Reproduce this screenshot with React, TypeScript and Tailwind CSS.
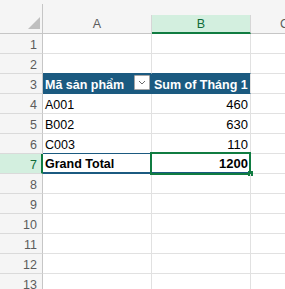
import React from "react";

type Row = { n: number; a?: string; b?: string; kind?: "head" | "data" | "total" };

const rows: Row[] = [
  { n: 1 },
  { n: 2 },
  { n: 3, a: "Mã sản phẩm", b: "Sum of Tháng 1", kind: "head" },
  { n: 4, a: "A001", b: "460", kind: "data" },
  { n: 5, a: "B002", b: "630", kind: "data" },
  { n: 6, a: "C003", b: "110", kind: "data" },
  { n: 7, a: "Grand Total", b: "1200", kind: "total" },
  { n: 8 },
  { n: 9 },
  { n: 10 },
  { n: 11 },
  { n: 12 },
  { n: 13 },
  { n: 14 },
];

function Chevron() {
  return (
    <svg width="8" height="5" viewBox="0 0 8 5" fill="none">
      <path d="M1 1 L4 4 L7 1" stroke="#6b6b6b" strokeWidth="1" />
    </svg>
  );
}

export default function App() {
  const dataFont = "font-['Liberation_Sans',Arial,sans-serif] text-[12.5px] leading-[12px]";
  const numFont = "font-['Liberation_Sans',Arial,sans-serif] text-[13px] leading-[12px]";
  const hdrFont = "font-['Liberation_Sans',Arial,sans-serif] text-[12.5px] leading-[12px]";
  return (
    <div className="w-[285px] h-[289px] overflow-hidden bg-white">
      {/* Column header */}
      <div className={`flex h-[34px] items-end bg-[#f5f5f5] ${hdrFont}`}>
        <div className="flex h-[34px] w-[43px] shrink-0 border-b border-[#c6c6c6]">
          <div className="relative w-[42px]">
            <svg className="absolute left-[28px] top-[17px]" width="12" height="12" viewBox="0 0 12 12">
              <polygon points="12,0 12,12 0,12" fill="#bfbfbf" />
            </svg>
          </div>
          <div className="mt-[4px] w-px bg-[#c6c6c6]" />
        </div>
        <div className="flex h-[19px] w-[109px] shrink-0 items-end justify-center border-r border-b border-r-[#d6d6d6] border-b-[#c6c6c6] pb-[3px] text-[#5c5c5c]">
          A
        </div>
        <div className="flex h-[19px] w-[99px] shrink-0 items-end justify-center border-r border-b-2 border-r-[#d6d6d6] border-b-[#107c41] bg-[#d3efdf] pb-[2px] text-[#0e6b38]">
          B
        </div>
        <div className="flex h-[19px] flex-1 items-end overflow-hidden whitespace-nowrap border-b border-[#c6c6c6] pb-[3px] pl-[29px] text-[#5c5c5c]">
          C
        </div>
      </div>

      {rows.map((r) => {
        const isHead = r.kind === "head";
        const isTotal = r.kind === "total";
        const abBottom =
          r.n === 2 || r.n === 3 || r.n === 6
            ? "border-b border-b-[#1b5a80]"
            : isTotal
            ? "border-b-2 border-b-[#1b5a80]"
            : "border-b border-b-[#e1e1e1]";
        return (
          <div key={r.n} className="flex h-[20px]">
            <div
              className={`flex w-[43px] shrink-0 items-end justify-end border-b border-b-[#dadada] pb-[2px] ${hdrFont} ${
                isTotal
                  ? "border-r-2 border-r-[#107c41] bg-[#d3efdf] pr-[4px] text-[#0e6b38]"
                  : "border-r border-r-[#c6c6c6] bg-[#f5f5f5] pr-[5px] text-[#5c5c5c]"
              }`}
            >
              {r.n}
            </div>
            <div
              className={`flex w-[109px] shrink-0 items-end pb-[2px] pl-[2px] ${dataFont} ${abBottom} border-r ${
                isHead ? "border-r-[#1b5a80] bg-[#1b5a80] font-bold text-white" : "border-r-[#e1e1e1] text-black"
              } ${isTotal ? "font-bold" : ""}`}
            >
              <span className="whitespace-nowrap">{r.a}</span>
              {isHead && (
                <div className="mr-[1px] ml-auto flex h-[15px] w-[16px] self-center items-center justify-center rounded-[1px] border border-[#a6a6a6] bg-white">
                  <Chevron />
                </div>
              )}
            </div>
            <div
              className={`relative flex w-[99px] shrink-0 items-end pb-[2px] ${abBottom} border-r border-r-[#e1e1e1] ${
                isHead
                  ? `${dataFont} justify-start bg-[#1b5a80] pl-[2px] font-bold text-white`
                  : `${numFont} justify-end pr-[2px] text-black`
              } ${isTotal ? "font-bold" : ""}`}
            >
              <span className="whitespace-nowrap">{r.b}</span>
              {isTotal && (
                <>
                  <div className="pointer-events-none absolute left-[-2px] top-[-2px] h-[23px] w-[101px] border-2 border-[#107c41]" />
                  <div className="absolute left-[96px] top-[17px] h-[5px] w-[5px] bg-[#107c41]" />
                </>
              )}
            </div>
            <div className="flex-1 border-b border-b-[#e1e1e1]" />
          </div>
        );
      })}
    </div>
  );
}
